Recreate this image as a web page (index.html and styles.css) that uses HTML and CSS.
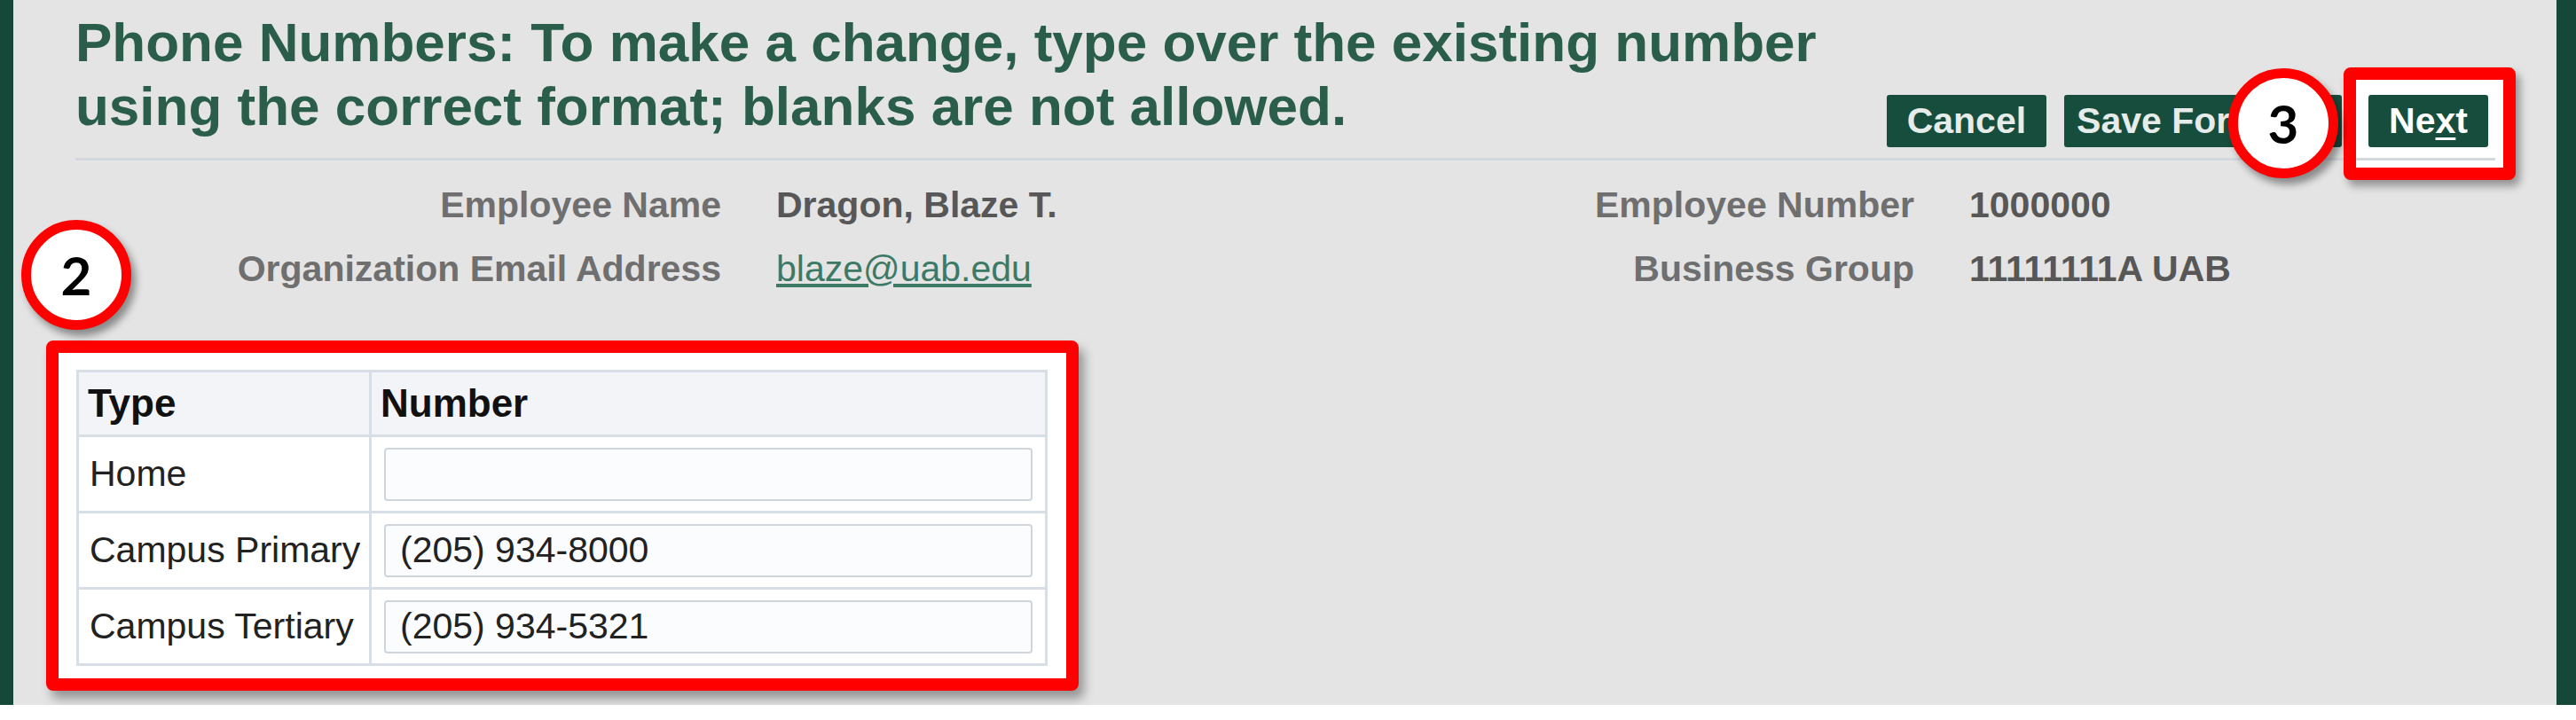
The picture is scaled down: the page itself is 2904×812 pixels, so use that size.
FILE: index.html
```html
<!DOCTYPE html>
<html lang="en">
<head>
    <meta charset="UTF-8">
    <title>Phone Numbers</title>
    <link rel="stylesheet" href="styles.css">
</head>
<body>
<div class="page">
    <div class="content">
        <!-- Title and actions -->
        <div class="header">
            <h1 class="title">Phone Numbers: To make a change, type over the existing number using the correct format; blanks are not allowed.</h1>
            <div class="actions">
                <button class="btn">Cancel</button>
                <button class="btn btn-save">Save For Later</button>
                <span class="hl-next"><button class="btn btn-next">Ne<u>x</u>t</button></span>
            </div>
        </div>

        <!-- Employee details -->
        <div class="info">
            <div class="label">Employee Name</div>
            <div class="value">Dragon, Blaze T.</div>
            <div class="label">Employee Number</div>
            <div class="value">1000000</div>
            <div class="label">Organization Email Address</div>
            <div class="value"><a href="#">blaze@uab.edu</a></div>
            <div class="label">Business Group</div>
            <div class="value">11111111A UAB</div>
        </div>

        <!-- Phone table -->
        <div class="hl-table">
            <table class="phones">
                <tr>
                    <th class="col-type">Type</th>
                    <th>Number</th>
                </tr>
                <tr>
                    <td>Home</td>
                    <td><input type="text" value=""></td>
                </tr>
                <tr>
                    <td>Campus Primary</td>
                    <td><input type="text" value="(205) 934-8000"></td>
                </tr>
                <tr>
                    <td>Campus Tertiary</td>
                    <td><input type="text" value="(205) 934-5321"></td>
                </tr>
            </table>
        </div>
    </div>

    <!-- Step markers -->
    <div class="step step-2">2</div>
    <div class="step step-3">3</div>
</div>
</body>
</html>
```

FILE: styles.css
```css
* {
    margin: 0;
    padding: 0;
    box-sizing: border-box;
}
body {
    background: #fff;
    font-family: 'Liberation Sans', Arial, sans-serif;
    overflow: hidden;
}

.page {
    position: relative;
    height: 795px;
    background: #e4e4e4;
    border-left: 15px solid #16483a;
    border-right: 22px solid #16483a;
}
.content {
    padding: 12px 69px 0 70px;
}

/* Шапка */
.header {
    display: flex;
    justify-content: space-between;
    align-items: flex-end;
    padding-bottom: 12px;
    border-bottom: 3px solid #d4d7db;
}
.title {
    max-width: 2070px;
    margin-bottom: 10px;
    font-size: 62px;
    line-height: 72px;
    font-weight: 700;
    color: #2a5d4a;
}
.actions {
    display: flex;
    gap: 20px;
    margin-right: 8px;
}
.btn {
    height: 59px;
    padding: 0 23px;
    border: none;
    border-radius: 3px;
    background: #174d3c;
    color: #e6ece9;
    font-family: 'Liberation Sans', Arial, sans-serif;
    font-size: 41px;
    font-weight: 700;
    white-space: nowrap;
}
.btn-save {
    width: 313px;
    padding: 0 14px;
    text-align: left;
    overflow: hidden;
}
.btn-next {
    color: #fff;
}
.btn-next u {
    text-decoration-thickness: 3px;
    text-underline-offset: 5px;
}
.hl-next {
    position: relative;
    z-index: 0;
    display: flex;
    margin-left: 10px;
}
.hl-next::before {
    content: '';
    position: absolute;
    top: -31px;
    left: -28px;
    right: -31px;
    bottom: -37px;
    z-index: -1;
    border: 14px solid #f00;
    border-radius: 8px;
    background: #fff linear-gradient(#d5d9de, #d5d9de) no-repeat 0 88px / 157px 3px;
    box-shadow: 5px 7px 10px rgba(0, 0, 0, 0.35);
}

/* Данные сотрудника */
.info {
    display: grid;
    grid-template-columns: 728px 500px 721px auto;
    column-gap: 62px;
    margin-top: 14px;
    font-size: 41px;
    line-height: 72px;
    font-weight: 700;
}
.info .label {
    text-align: right;
    color: #6f6f6f;
}
.info .value {
    color: #575757;
}
.info a {
    font-weight: 400;
    color: #3d7a66;
}

/* Таблица */
.hl-table {
    display: inline-block;
    margin: 45px 0 0 -33px;
    padding: 19px 21px 14px 20px;
    border: 14px solid #f00;
    border-radius: 8px;
    background: #fff;
    box-shadow: 6px 9px 12px rgba(0, 0, 0, 0.35);
}
.phones {
    width: 1095px;
    border-collapse: collapse;
    border: 3px solid #d8dee6;
}
.phones th,
.phones td {
    border: 3px solid #d8dee6;
    text-align: left;
    vertical-align: middle;
}
.phones th {
    height: 73px;
    padding: 0 10px;
    background: #f2f4f7;
    color: #111;
    font-size: 44px;
    font-weight: 700;
}
.phones .col-type {
    width: 330px;
}
.phones td {
    height: 86px;
    padding: 0 14px;
    color: #222;
    font-size: 41px;
}
.phones td:first-child {
    padding: 0 0 0 12px;
}
.phones input {
    display: block;
    width: 100%;
    height: 60px;
    padding: 0 16px;
    border: 2px solid #cfd5dc;
    border-radius: 4px;
    background: #fbfcfe;
    color: #222;
    font-family: 'Liberation Sans', Arial, sans-serif;
    font-size: 41px;
}

/* Номера шагов */
.step {
    position: absolute;
    width: 124px;
    height: 124px;
    display: flex;
    align-items: center;
    justify-content: center;
    border: 11px solid #f00;
    border-radius: 50%;
    background: #fff;
    box-shadow: 5px 7px 9px rgba(0, 0, 0, 0.4);
    color: #000;
    font-family: Lato, 'Liberation Sans', sans-serif;
    font-size: 60px;
    font-weight: 700;
}
.step-2 {
    left: 9px;
    top: 248px;
}
.step-3 {
    left: 2497px;
    top: 77px;
}
```
